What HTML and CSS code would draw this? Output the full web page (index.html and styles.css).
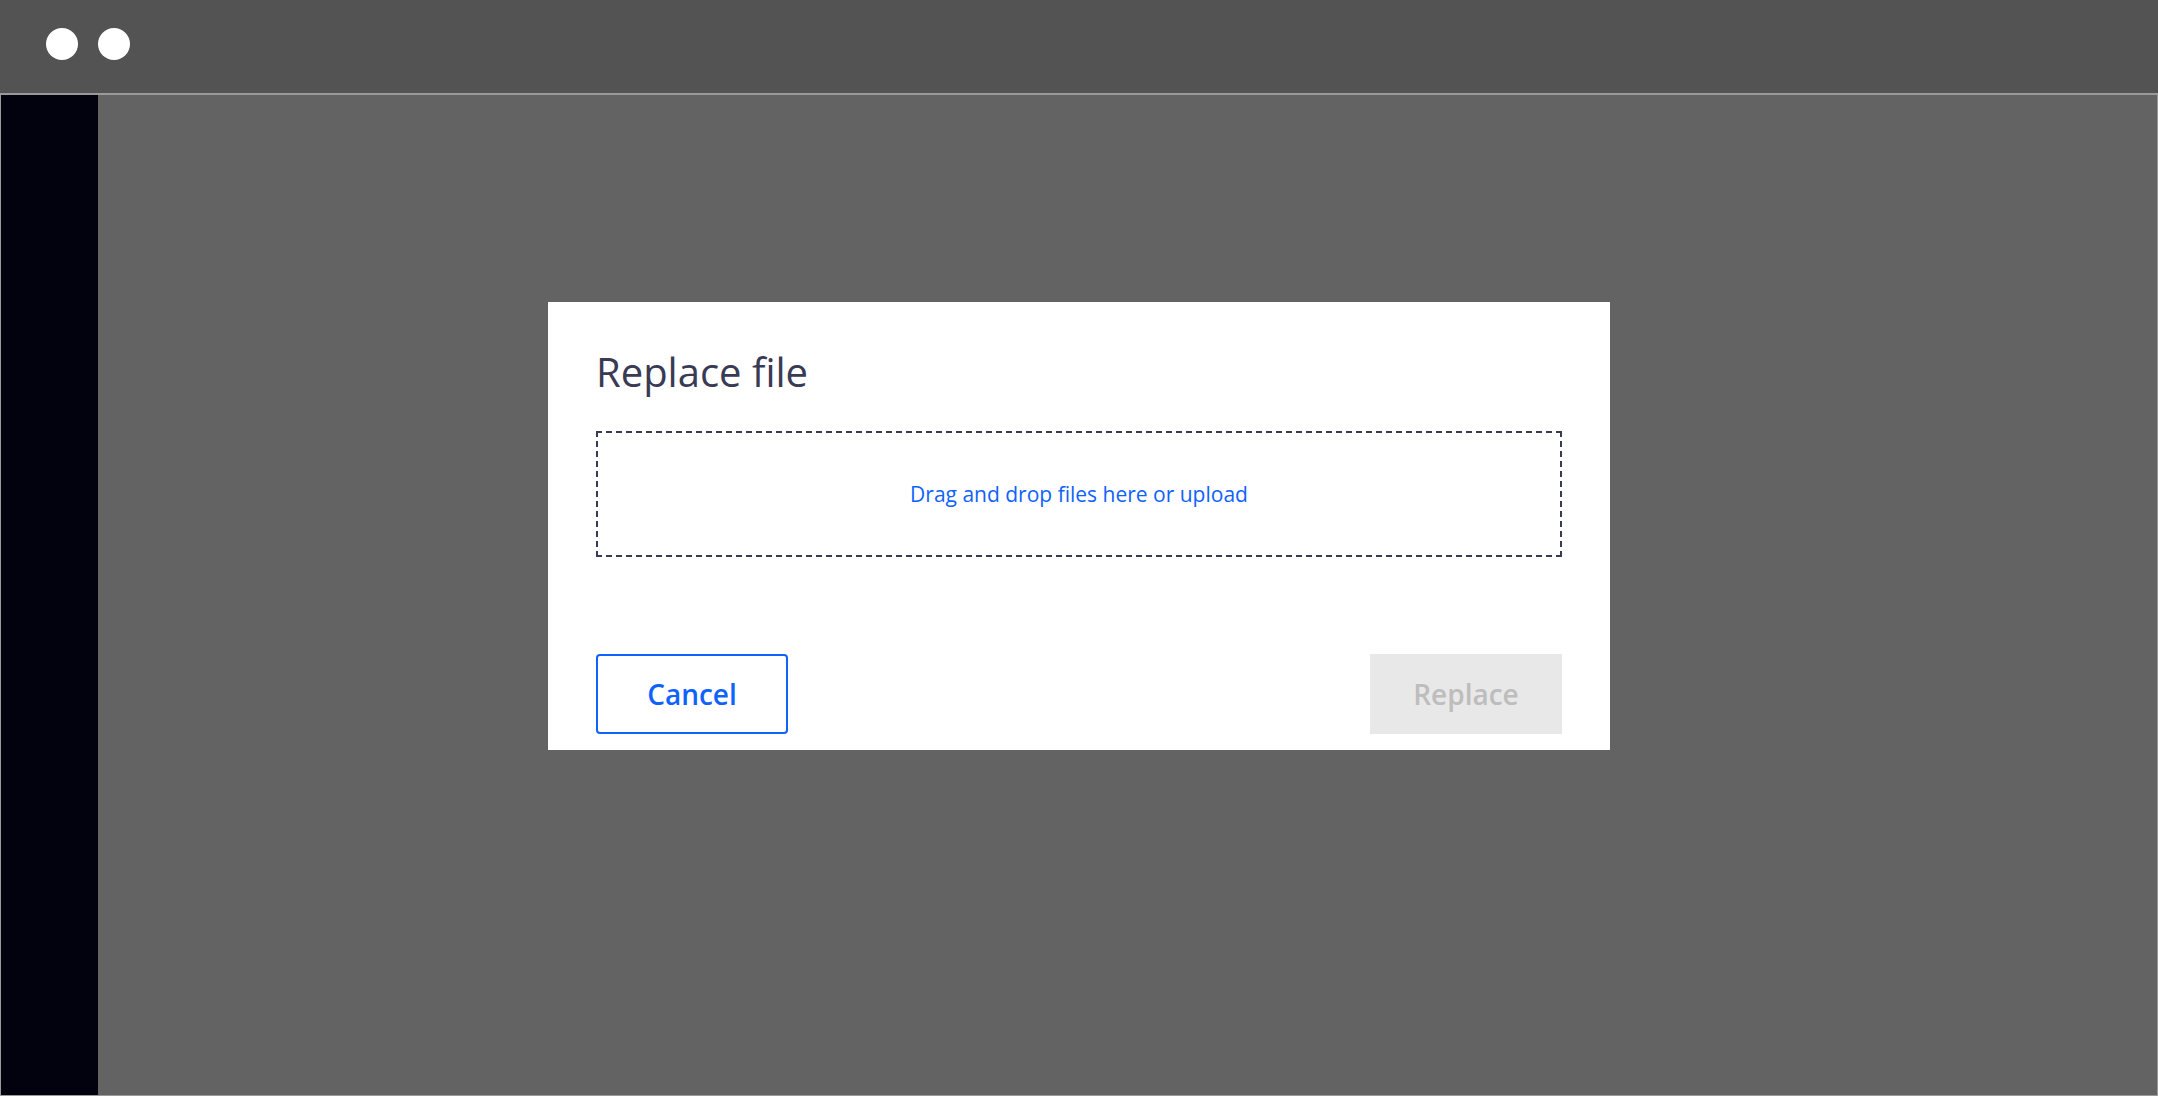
FILE: index.html
```html
<!DOCTYPE html>
<html lang="en">
<head>
<meta charset="utf-8">
<title>Replace file</title>
<link rel="stylesheet" href="styles.css">
</head>
<body>
<div class="window">
  <header class="titlebar">
    <span class="dot"></span>
    <span class="dot"></span>
  </header>
  <div class="frame">
    <aside class="sidebar"></aside>
    <main class="main">
      <section class="dialog">
        <h1 class="dialog-title">Replace file</h1>
        <div class="dropzone">
          <span class="dropzone-text">Drag and drop files here or upload</span>
        </div>
        <div class="actions">
          <button class="btn btn-cancel" type="button">Cancel</button>
          <button class="btn btn-replace" type="button" disabled>Replace</button>
        </div>
      </section>
    </main>
  </div>
</div>
</body>
</html>
```

FILE: styles.css
```css
* { box-sizing: border-box; }
html, body { margin: 0; padding: 0; }
body {
  width: 2158px;
  height: 1096px;
  overflow: hidden;
  font-family: "Open Sans", "Noto Sans", sans-serif;
  background: #636363;
}
.window {
  display: flex;
  flex-direction: column;
  height: 1096px;
}
.titlebar {
  height: 93px;
  flex: none;
  background: #535353;
  display: flex;
  align-items: flex-start;
  gap: 20px;
  padding: 28px 0 0 46px;
}
.dot {
  width: 32px;
  height: 32px;
  border-radius: 50%;
  background: #ffffff;
}
.frame {
  flex: 1;
  display: flex;
  border: 1px solid #9a9a9a;
  border-top-width: 2px;
  min-height: 0;
}
.sidebar {
  width: 97px;
  flex: none;
  background: #01020e;
}
.main {
  flex: 1;
  background: #636363;
  display: flex;
  align-items: flex-start;
  padding: 207px 0 0 450px;
}
.dialog {
  width: 1062px;
  height: 448px;
  background: #ffffff;
  padding: 0 48px 16px;
  display: flex;
  flex-direction: column;
}
.dialog-title {
  margin: 41px 0 0;
  font-size: 40px;
  font-weight: 400;
  line-height: 57px;
  color: #393a54;
}
.dropzone {
  margin-top: 31px;
  height: 126px;
  display: flex;
  align-items: center;
  justify-content: center;
  background:
    linear-gradient(90deg, #393a54 60%, transparent 0) top left / 10px 2px repeat-x,
    linear-gradient(90deg, #393a54 60%, transparent 0) bottom left / 10px 2px repeat-x,
    linear-gradient(180deg, #393a54 60%, transparent 0) top left / 2px 10px repeat-y,
    linear-gradient(180deg, #393a54 60%, transparent 0) top right / 2px 10px repeat-y;
}
.dropzone-text {
  font-size: 21px;
  color: #0f62fe;
}
.actions {
  margin-top: 97px;
  display: flex;
  justify-content: space-between;
}
.btn {
  width: 192px;
  height: 80px;
  font-family: "Open Sans", "Noto Sans", sans-serif;
  font-size: 28px;
  font-weight: 600;
  padding: 0;
  margin: 0;
}
.btn-cancel {
  background: #ffffff;
  color: #0f62fe;
  border: 2px solid #0f62fe;
  border-radius: 4px;
}
.btn-replace {
  background: #e8e8e8;
  color: #bdbdbd;
  border: none;
  border-radius: 0;
}
```
